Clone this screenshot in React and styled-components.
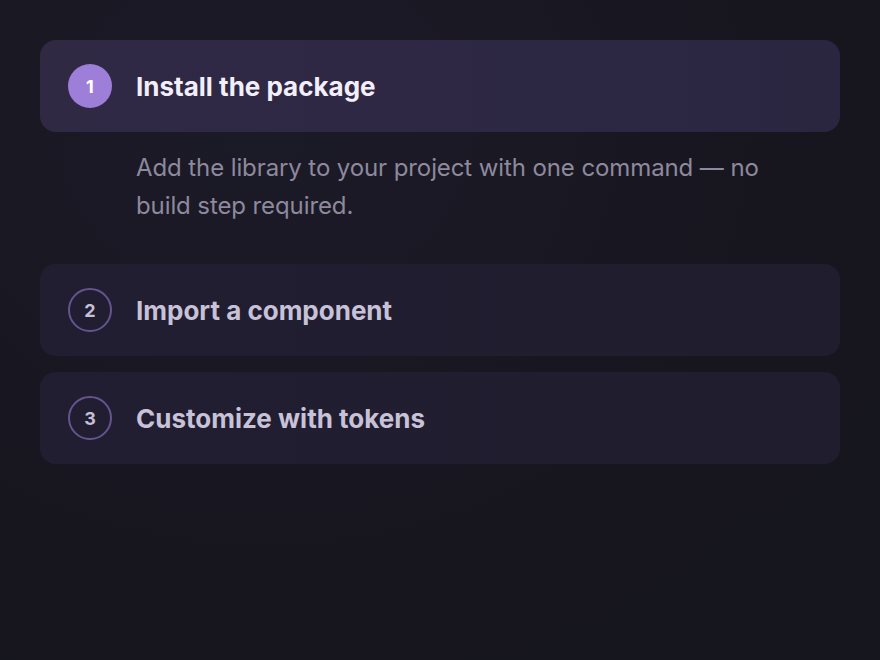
import React from "react"
import styled, { createGlobalStyle } from "styled-components"

const GlobalStyle = createGlobalStyle`
  html, body {
    margin: 0;
    padding: 0;
    height: 100%;
    background: #16161e;
  }
  #root {
    min-height: 100%;
  }
`

const Page = styled.div`
  box-sizing: border-box;
  width: 880px;
  height: 660px;
  padding: 40px;
  background: radial-gradient(ellipse at 30% 20%, #1b1a27 0%, #17161f 60%, #16161e 100%);
  font-family: Inter, "Noto Sans", sans-serif;
`

const List = styled.div`
  display: flex;
  flex-direction: column;
  gap: 16px;
`

const Item = styled.div`
  display: flex;
  flex-direction: column;
`

const Header = styled.div`
  display: flex;
  align-items: center;
  gap: 24px;
  height: 92px;
  box-sizing: border-box;
  padding: 0 28px;
  border-radius: 16px;
  background: ${p =>
    p.open
      ? "linear-gradient(90deg, #302944 0%, #2e2845 40%, #2a2640 100%)"
      : "linear-gradient(90deg, #211e31 0%, #201d2f 100%)"};
`

const Badge = styled.div`
  box-sizing: border-box;
  width: 44px;
  height: 44px;
  border-radius: 50%;
  display: flex;
  align-items: center;
  justify-content: center;
  font-size: 18px;
  font-weight: 700;
  flex-shrink: 0;
  background: ${p => (p.open ? "#9d7ed8" : "transparent")};
  border: ${p => (p.open ? "none" : "2px solid #64558f")};
  color: ${p => (p.open ? "#ffffff" : "#c6bfd8")};
`

const Title = styled.div`
  font-size: 26px;
  font-weight: 700;
  color: ${p => (p.open ? "#f3effa" : "#c8c2d8")};
`

const Body = styled.p`
  margin: 0;
  padding: 17px 64px 23px 96px;
  font-size: 24px;
  line-height: 38px;
  letter-spacing: -0.1px;
  color: #8e899d;
`

const steps = [
  {
    n: 1,
    title: "Install the package",
    text: "Add the library to your project with one command — no build step required.",
  },
  { n: 2, title: "Import a component" },
  { n: 3, title: "Customize with tokens" },
]

const App = () => {
  return (
    <Page>
      <GlobalStyle />
      <List>
        {steps.map((s, i) => {
          const open = i === 0
          return (
            <Item key={s.n}>
              <Header open={open}>
                <Badge open={open}>{s.n}</Badge>
                <Title open={open}>{s.title}</Title>
              </Header>
              {open && <Body>{s.text}</Body>}
            </Item>
          )
        })}
      </List>
    </Page>
  )
}

export default App
